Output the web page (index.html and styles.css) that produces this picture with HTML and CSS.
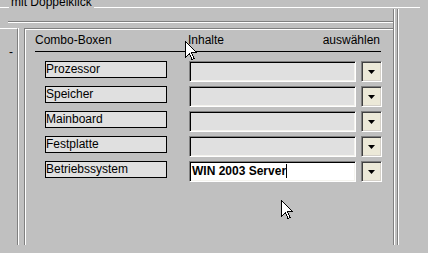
FILE: index.html
```html
<!DOCTYPE html>
<html>
<head>
<title>Combo-Boxen</title>
<meta charset="utf-8">
<link rel="stylesheet" href="styles.css">
</head>
<body>
<div class="group">
<span class="caption">mit Doppelklick</span>
<div class="frame">
  <div class="area">
    <div class="strip"></div>
    <div class="lower">
      <div class="side"><span class="dash">-</span></div>
      <div class="panel">
        <div class="head">
          <span>Combo-Boxen</span>
          <span>Inhalte</span>
          <span class="right">auswählen</span>
        </div>
        <div class="rows">
          <div class="row">
            <div class="label">Prozessor</div>
            <div class="field"></div>
            <div class="drop"><svg width="7" height="4" viewBox="0 0 7 4"><polygon points="0,0 7,0 3.5,4" fill="#000"/></svg></div>
          </div>
          <div class="row">
            <div class="label">Speicher</div>
            <div class="field"></div>
            <div class="drop"><svg width="7" height="4" viewBox="0 0 7 4"><polygon points="0,0 7,0 3.5,4" fill="#000"/></svg></div>
          </div>
          <div class="row">
            <div class="label">Mainboard</div>
            <div class="field"></div>
            <div class="drop"><svg width="7" height="4" viewBox="0 0 7 4"><polygon points="0,0 7,0 3.5,4" fill="#000"/></svg></div>
          </div>
          <div class="row">
            <div class="label">Festplatte</div>
            <div class="field"></div>
            <div class="drop"><svg width="7" height="4" viewBox="0 0 7 4"><polygon points="0,0 7,0 3.5,4" fill="#000"/></svg></div>
          </div>
          <div class="row">
            <div class="label">Betriebssystem</div>
            <div class="field active"><span class="caret">WIN 2003 Server</span></div>
            <div class="drop"><svg width="7" height="4" viewBox="0 0 7 4"><polygon points="0,0 7,0 3.5,4" fill="#000"/></svg></div>
          </div>
        </div>
      </div>
    </div>
  </div>
  <div class="rail"></div>
</div>
</div>
<!-- mouse pointers -->
<svg class="pointer p1" width="12" height="20" viewBox="0 0 12 20" shape-rendering="crispEdges"><polygon points="0.5,0.5 0.5,16.5 4.5,12.5 7,18.5 9,17.5 6.5,11.5 11.5,11.5" fill="#fff" stroke="#000"/></svg>
<svg class="pointer p2" width="12" height="20" viewBox="0 0 12 20" shape-rendering="crispEdges"><polygon points="0.5,0.5 0.5,16.5 4.5,12.5 7,18.5 9,17.5 6.5,11.5 11.5,11.5" fill="#fff" stroke="#000"/></svg>
</body>
</html>
```

FILE: styles.css
```css
html {
    background-color: #c0c0c0;
}
body {
    margin: 0;
    padding-top: 7px;
    box-sizing: border-box;
    width: 428px;
    height: 253px;
    overflow: hidden;
    background-color: #c0c0c0;
    font-family: "Liberation Sans", Arial, sans-serif;
    font-size: 12px;
    color: #000;
    position: relative;
}
.group {
    width: 420px;
    border-top: 1px solid #fff;
    position: relative;
}
.caption {
    position: absolute;
    left: 9px;
    top: -13px;
    padding: 0 2px;
    line-height: 14px;
    background-color: #c0c0c0;
}
.frame {
    display: flex;
    align-items: flex-start;
    height: 237px;
    overflow: hidden;
}
.area {
    width: 393px;
}
.strip {
    margin: 13px 0 0 8px;
    border-top: 1px solid #808080;
    border-bottom: 1px solid #fff;
}
.lower {
    display: flex;
    margin-top: 5px;
    height: 217px;
}
.side {
    width: 17px;
    border-top: 1px solid #fff;
    border-right: 1px solid #808080;
    box-shadow: 1px 0 0 #fff;
}
.dash {
    display: block;
    padding: 16px 0 0 9px;
    line-height: 14px;
}
.panel {
    flex: 1;
    margin-left: 6px;
    border-left: 1px solid #808080;
    border-top: 1px solid #808080;
    box-shadow: inset 1px 1px 0 #fff;
}
.head {
    display: grid;
    grid-template-columns: 153px 1fr auto;
    margin: 4px 12px 0 10px;
    padding-bottom: 4px;
    line-height: 14px;
    border-bottom: 1px solid #000;
}
.head .right {
    margin-right: 1px;
}
.rows {
    margin: 9px 0 0 20px;
}
.row {
    display: flex;
    align-items: flex-start;
    height: 21px;
    margin-bottom: 4px;
}
.label {
    box-sizing: border-box;
    width: 122px;
    height: 17px;
    border: 1px solid #000;
    background-color: #e0e0e0;
    line-height: 15px;
    white-space: nowrap;
}
.field {
    box-sizing: border-box;
    width: 167px;
    height: 21px;
    margin-left: 22px;
    background-color: #e0e0e0;
    border: 1px solid;
    border-color: #808080 #fff #fff #808080;
    box-shadow: inset 1px 1px 0 #000, inset -1px -1px 0 #f4f3ee;
}
.field.active {
    background-color: #fff;
    padding: 2px 0 0 2px;
    font-weight: bold;
    line-height: 15px;
}
.caret {
    border-right: 1px solid #000;
}
.drop {
    box-sizing: border-box;
    width: 21px;
    height: 21px;
    margin-left: 5px;
    background-color: #ece9d8;
    border: 1px solid;
    border-color: #808080 #fff #fff #808080;
    box-shadow: inset 1px 1px 0 #404040, inset -1px -1px 0 #d4d0c8;
    display: flex;
    align-items: center;
    justify-content: center;
}
.drop svg {
    margin-top: 1px;
}
.rail {
    width: 3px;
    height: 236px;
    margin-top: 1px;
    border-left: 1px solid #808080;
    border-right: 1px solid #808080;
    box-shadow: inset 1px 0 0 #fff, 1px 0 0 #fff;
}
.pointer {
    position: absolute;
}
.p1 {
    left: 185px;
    top: 41px;
}
.p2 {
    left: 281px;
    top: 200px;
}
```
